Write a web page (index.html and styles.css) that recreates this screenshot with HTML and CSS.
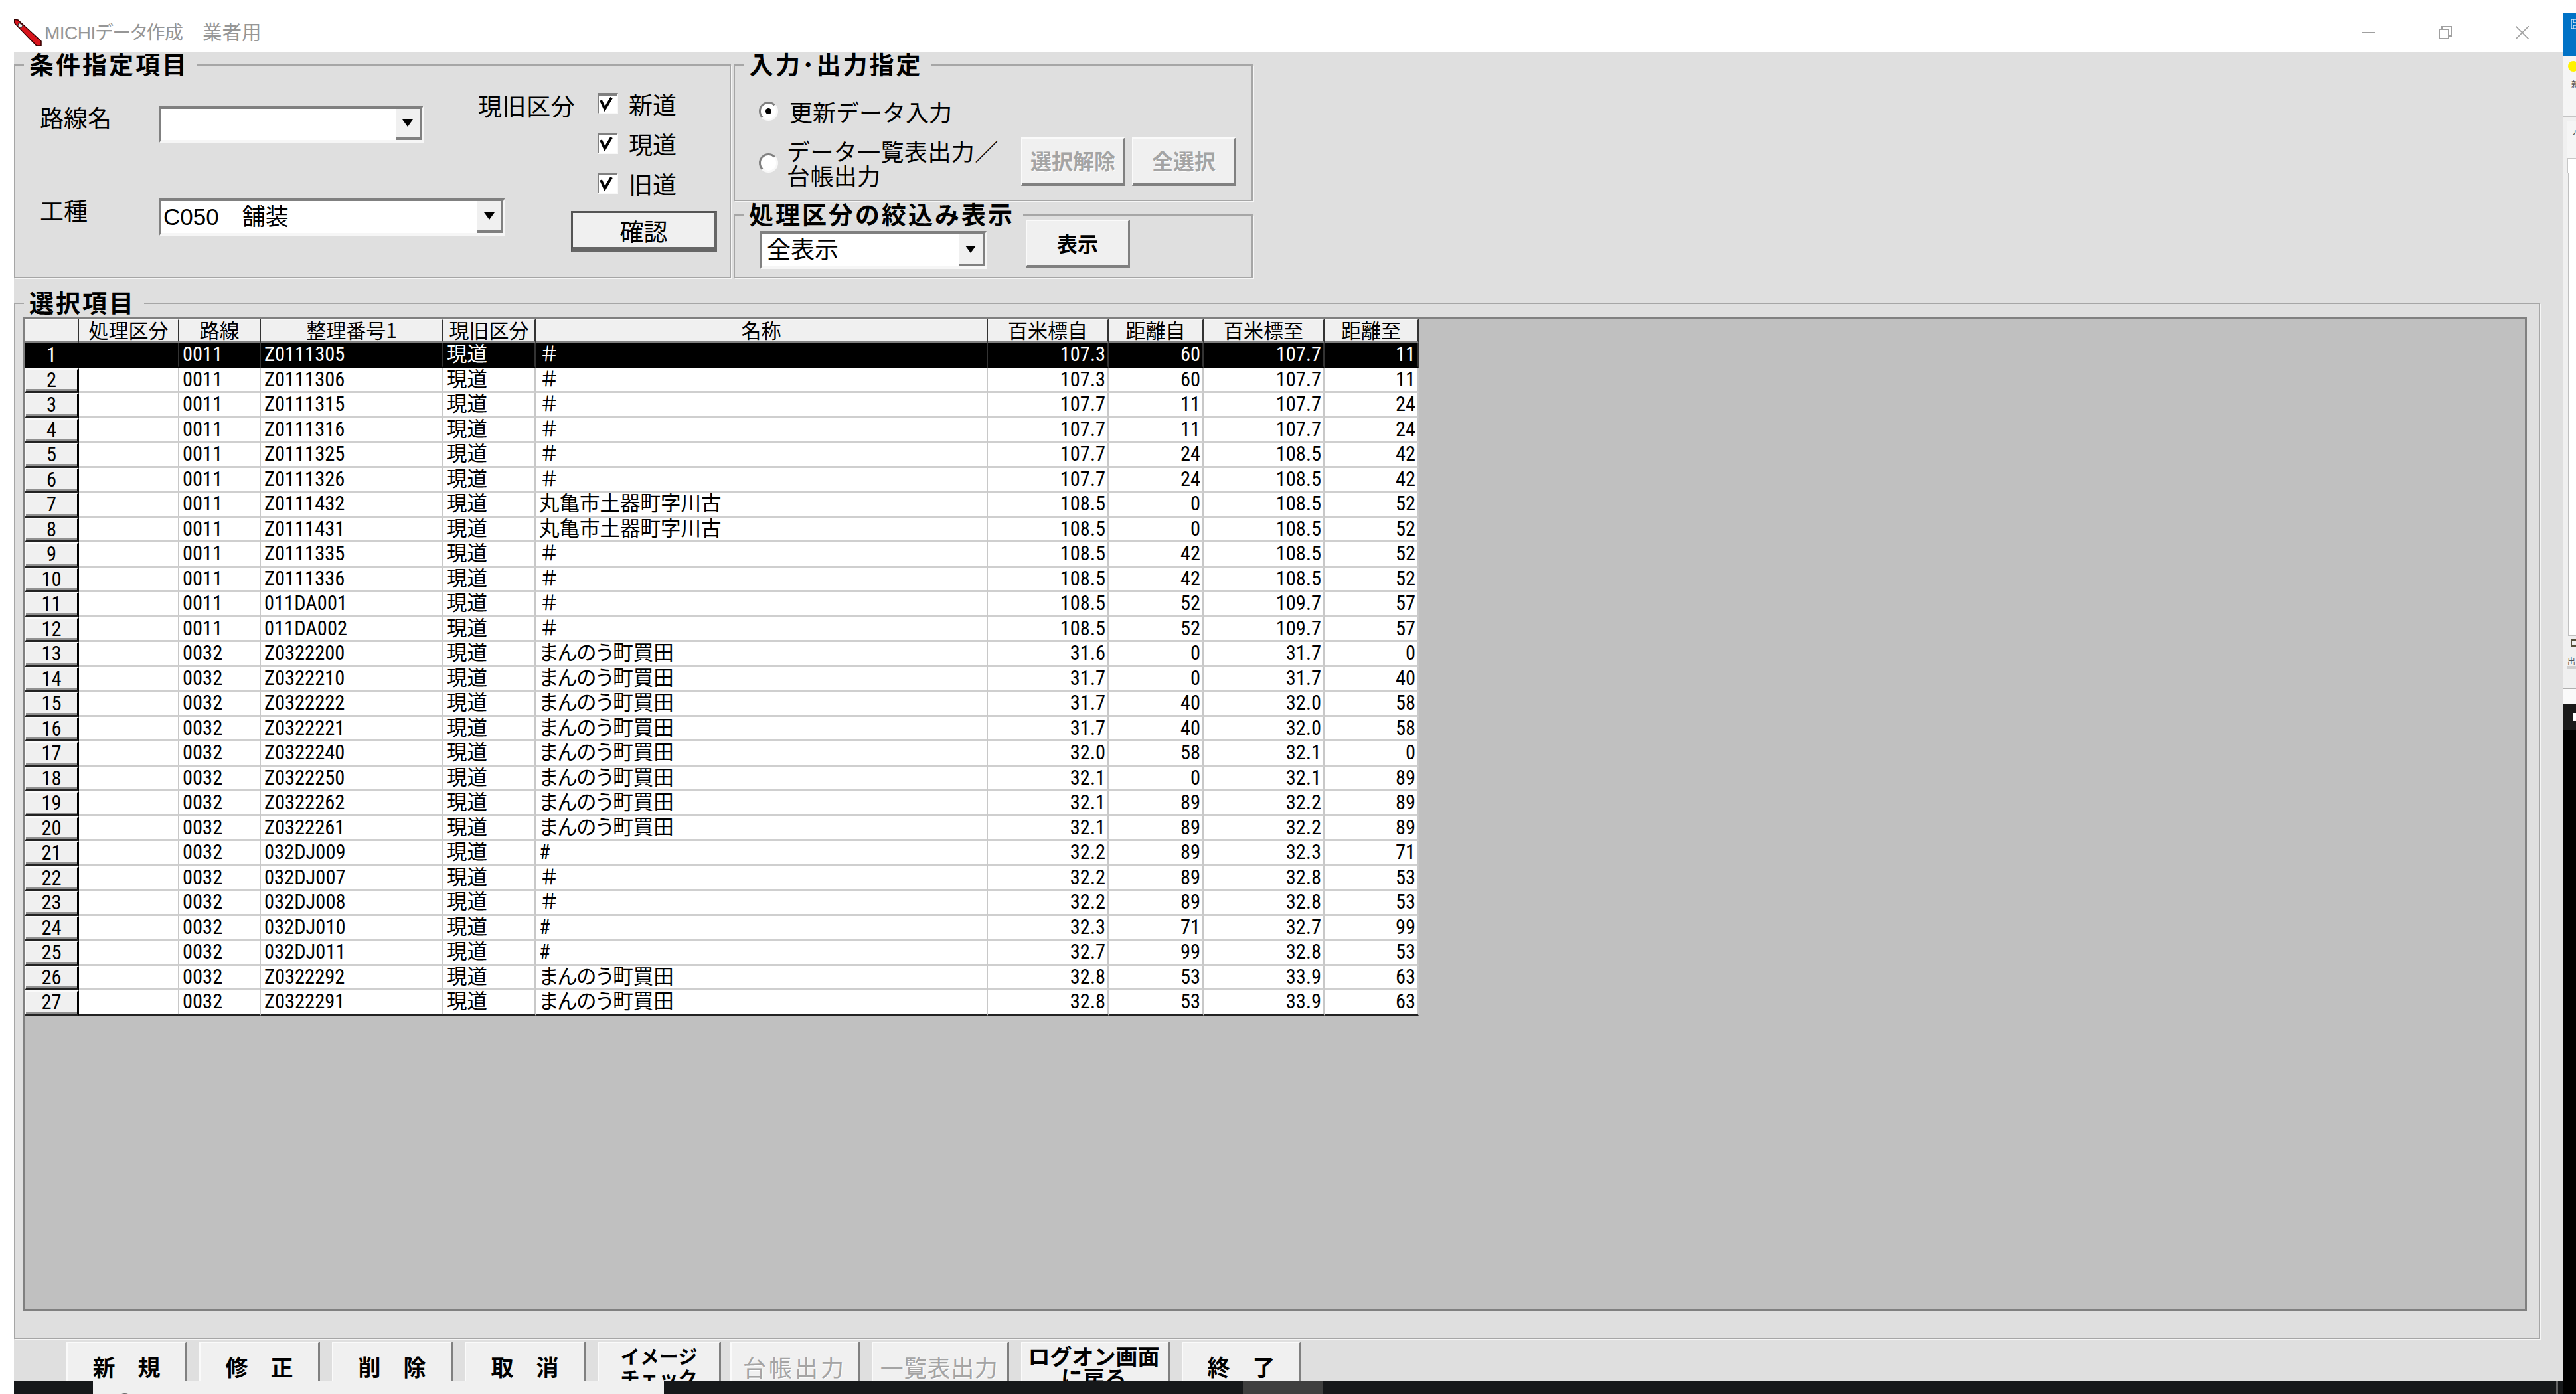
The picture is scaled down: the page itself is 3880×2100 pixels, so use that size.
FILE: index.html
```html
<!DOCTYPE html>
<html lang="ja">
<head>
    <meta charset="UTF-8">
    <title>MICHIデータ作成　業者用</title>
    <link rel="stylesheet" href="styles.css">
</head>
<body>
<div class="screen">
    <div class="app">
        <div class="titlebar">
            <svg class="app-icon" width="42" height="40" viewBox="0 0 42 40">
                <polygon points="0,0 6,1 41,33 41,40 34,40 1,6" fill="#d8141c" stroke="#300" stroke-width="1.5"/>
                <polygon points="7,5 13,9 11,13 6,10" fill="#eee" stroke="#333" stroke-width="1"/>
            </svg>
            <span class="title-text"><span class="title-main">MICHIデータ作成</span>　業者用</span>
            <div class="window-controls">
                <span class="win-btn"><svg width="20" height="20" viewBox="0 0 20 20"><path d="M0 10H20" stroke="#a0a0a0" stroke-width="2"/></svg></span>
                <span class="win-btn"><svg width="20" height="20" viewBox="0 0 20 20"><rect x="1" y="5" width="14" height="14" fill="none" stroke="#a0a0a0" stroke-width="2"/><path d="M5 5V1H19V15H15" fill="none" stroke="#a0a0a0" stroke-width="2"/></svg></span>
                <span class="win-btn"><svg width="20" height="20" viewBox="0 0 20 20"><path d="M0 0L20 20M20 0L0 20" stroke="#a0a0a0" stroke-width="1.6"/></svg></span>
            </div>
        </div>

        <div class="client">
            <div class="top-row">
                <fieldset class="group group-cond">
                    <legend>条件指定項目</legend>
                    <div class="cond-upper">
                        <span class="form-label">路線名</span>
                        <div class="combo combo-route">
                            <span class="combo-value"></span>
                            <span class="combo-drop"><i class="arrow"></i></span>
                        </div>
                        <span class="kubun-label">現旧区分</span>
                        <div class="checks">
                            <label class="check-row"><span class="checkbox"><svg width="27" height="26" viewBox="0 0 27 26"><path d="M3 7L9 20L19 3" fill="none" stroke="#000" stroke-width="4"/></svg></span>新道</label>
                            <label class="check-row"><span class="checkbox"><svg width="27" height="26" viewBox="0 0 27 26"><path d="M3 7L9 20L19 3" fill="none" stroke="#000" stroke-width="4"/></svg></span>現道</label>
                            <label class="check-row"><span class="checkbox"><svg width="27" height="26" viewBox="0 0 27 26"><path d="M3 7L9 20L19 3" fill="none" stroke="#000" stroke-width="4"/></svg></span>旧道</label>
                        </div>
                    </div>
                    <div class="cond-lower">
                        <span class="form-label">工種</span>
                        <div class="combo combo-kind">
                            <span class="combo-value">C050　舗装</span>
                            <span class="combo-drop"><i class="arrow"></i></span>
                        </div>
                        <button class="btn btn-default btn-confirm">確認</button>
                    </div>
                </fieldset>

                <div class="right-groups">
                    <fieldset class="group group-io">
                        <legend>入力･出力指定</legend>
                        <div class="radio-row radio-first">
                            <span class="radio radio-on"><i></i></span>
                            <span class="radio-text">更新データ入力</span>
                        </div>
                        <div class="radio-row">
                            <span class="radio"></span>
                            <span class="radio-text radio-text-wide">データ一覧表出力／<br>台帳出力</span>
                            <button class="btn btn-small btn-disabled">選択解除</button>
                            <button class="btn btn-small btn-disabled">全選択</button>
                        </div>
                    </fieldset>
                    <fieldset class="group group-filter">
                        <legend>処理区分の絞込み表示</legend>
                        <div class="filter-row">
                            <div class="combo combo-filter">
                                <span class="combo-value">全表示</span>
                                <span class="combo-drop"><i class="arrow"></i></span>
                            </div>
                            <button class="btn btn-small btn-show">表示</button>
                        </div>
                    </fieldset>
                </div>
            </div>

            <fieldset class="group group-list">
                <legend>選択項目</legend>
                <div class="grid-area">
                    <table class="grid">
                        <colgroup>
                            <col class="c-head"><col class="c-kbn"><col class="c-route"><col class="c-no"><col class="c-old"><col class="c-name"><col class="c-km"><col class="c-dist"><col class="c-km"><col class="c-dist2">
                        </colgroup>
                        <thead>
                            <tr><th></th><th>処理区分</th><th>路線</th><th>整理番号1</th><th>現旧区分</th><th>名称</th><th>百米標自</th><th>距離自</th><th>百米標至</th><th>距離至</th></tr>
                        </thead>
                        <tbody>
                            <tr class="selected"><th>1</th><td></td><td>0011</td><td>Z0111305</td><td>現道</td><td>＃</td><td class="num">107.3</td><td class="num">60</td><td class="num">107.7</td><td class="num">11</td></tr>
                            <tr><th>2</th><td></td><td>0011</td><td>Z0111306</td><td>現道</td><td>＃</td><td class="num">107.3</td><td class="num">60</td><td class="num">107.7</td><td class="num">11</td></tr>
                            <tr><th>3</th><td></td><td>0011</td><td>Z0111315</td><td>現道</td><td>＃</td><td class="num">107.7</td><td class="num">11</td><td class="num">107.7</td><td class="num">24</td></tr>
                            <tr><th>4</th><td></td><td>0011</td><td>Z0111316</td><td>現道</td><td>＃</td><td class="num">107.7</td><td class="num">11</td><td class="num">107.7</td><td class="num">24</td></tr>
                            <tr><th>5</th><td></td><td>0011</td><td>Z0111325</td><td>現道</td><td>＃</td><td class="num">107.7</td><td class="num">24</td><td class="num">108.5</td><td class="num">42</td></tr>
                            <tr><th>6</th><td></td><td>0011</td><td>Z0111326</td><td>現道</td><td>＃</td><td class="num">107.7</td><td class="num">24</td><td class="num">108.5</td><td class="num">42</td></tr>
                            <tr><th>7</th><td></td><td>0011</td><td>Z0111432</td><td>現道</td><td>丸亀市土器町字川古</td><td class="num">108.5</td><td class="num">0</td><td class="num">108.5</td><td class="num">52</td></tr>
                            <tr><th>8</th><td></td><td>0011</td><td>Z0111431</td><td>現道</td><td>丸亀市土器町字川古</td><td class="num">108.5</td><td class="num">0</td><td class="num">108.5</td><td class="num">52</td></tr>
                            <tr><th>9</th><td></td><td>0011</td><td>Z0111335</td><td>現道</td><td>＃</td><td class="num">108.5</td><td class="num">42</td><td class="num">108.5</td><td class="num">52</td></tr>
                            <tr><th>10</th><td></td><td>0011</td><td>Z0111336</td><td>現道</td><td>＃</td><td class="num">108.5</td><td class="num">42</td><td class="num">108.5</td><td class="num">52</td></tr>
                            <tr><th>11</th><td></td><td>0011</td><td>011DA001</td><td>現道</td><td>＃</td><td class="num">108.5</td><td class="num">52</td><td class="num">109.7</td><td class="num">57</td></tr>
                            <tr><th>12</th><td></td><td>0011</td><td>011DA002</td><td>現道</td><td>＃</td><td class="num">108.5</td><td class="num">52</td><td class="num">109.7</td><td class="num">57</td></tr>
                            <tr><th>13</th><td></td><td>0032</td><td>Z0322200</td><td>現道</td><td class="kana">まんのう町買田</td><td class="num">31.6</td><td class="num">0</td><td class="num">31.7</td><td class="num">0</td></tr>
                            <tr><th>14</th><td></td><td>0032</td><td>Z0322210</td><td>現道</td><td class="kana">まんのう町買田</td><td class="num">31.7</td><td class="num">0</td><td class="num">31.7</td><td class="num">40</td></tr>
                            <tr><th>15</th><td></td><td>0032</td><td>Z0322222</td><td>現道</td><td class="kana">まんのう町買田</td><td class="num">31.7</td><td class="num">40</td><td class="num">32.0</td><td class="num">58</td></tr>
                            <tr><th>16</th><td></td><td>0032</td><td>Z0322221</td><td>現道</td><td class="kana">まんのう町買田</td><td class="num">31.7</td><td class="num">40</td><td class="num">32.0</td><td class="num">58</td></tr>
                            <tr><th>17</th><td></td><td>0032</td><td>Z0322240</td><td>現道</td><td class="kana">まんのう町買田</td><td class="num">32.0</td><td class="num">58</td><td class="num">32.1</td><td class="num">0</td></tr>
                            <tr><th>18</th><td></td><td>0032</td><td>Z0322250</td><td>現道</td><td class="kana">まんのう町買田</td><td class="num">32.1</td><td class="num">0</td><td class="num">32.1</td><td class="num">89</td></tr>
                            <tr><th>19</th><td></td><td>0032</td><td>Z0322262</td><td>現道</td><td class="kana">まんのう町買田</td><td class="num">32.1</td><td class="num">89</td><td class="num">32.2</td><td class="num">89</td></tr>
                            <tr><th>20</th><td></td><td>0032</td><td>Z0322261</td><td>現道</td><td class="kana">まんのう町買田</td><td class="num">32.1</td><td class="num">89</td><td class="num">32.2</td><td class="num">89</td></tr>
                            <tr><th>21</th><td></td><td>0032</td><td>032DJ009</td><td>現道</td><td>#</td><td class="num">32.2</td><td class="num">89</td><td class="num">32.3</td><td class="num">71</td></tr>
                            <tr><th>22</th><td></td><td>0032</td><td>032DJ007</td><td>現道</td><td>＃</td><td class="num">32.2</td><td class="num">89</td><td class="num">32.8</td><td class="num">53</td></tr>
                            <tr><th>23</th><td></td><td>0032</td><td>032DJ008</td><td>現道</td><td>＃</td><td class="num">32.2</td><td class="num">89</td><td class="num">32.8</td><td class="num">53</td></tr>
                            <tr><th>24</th><td></td><td>0032</td><td>032DJ010</td><td>現道</td><td>#</td><td class="num">32.3</td><td class="num">71</td><td class="num">32.7</td><td class="num">99</td></tr>
                            <tr><th>25</th><td></td><td>0032</td><td>032DJ011</td><td>現道</td><td>#</td><td class="num">32.7</td><td class="num">99</td><td class="num">32.8</td><td class="num">53</td></tr>
                            <tr><th>26</th><td></td><td>0032</td><td>Z0322292</td><td>現道</td><td class="kana">まんのう町買田</td><td class="num">32.8</td><td class="num">53</td><td class="num">33.9</td><td class="num">63</td></tr>
                            <tr><th>27</th><td></td><td>0032</td><td>Z0322291</td><td>現道</td><td class="kana">まんのう町買田</td><td class="num">32.8</td><td class="num">53</td><td class="num">33.9</td><td class="num">63</td></tr>
                        </tbody>
                    </table>
                </div>
            </fieldset>

            <div class="button-bar">
                <button class="btn bar-btn">新　規</button>
                <button class="btn bar-btn">修　正</button>
                <button class="btn bar-btn">削　除</button>
                <button class="btn bar-btn">取　消</button>
                <button class="btn bar-btn bar-two bar-image">イメージ<br>チェック</button>
                <button class="btn bar-btn btn-disabled bar-ledger">台帳出力</button>
                <button class="btn bar-btn btn-disabled bar-list">一覧表出力</button>
                <button class="btn bar-btn bar-two bar-logon">ログオン画面<br>に戻る</button>
                <button class="btn bar-btn bar-end">終　了</button>
            </div>
        </div>

        <div class="taskbar-row">
            <div class="taskbar">
                <div class="search-box"><i class="search-ring"></i></div>
                <div class="task-tile"></div>
                <span class="clock">15:05</span>
                <i class="task-sep"></i>
            </div>
        </div>
    </div>

    <div class="side-window">
        <div class="side-top"></div>
        <div class="side-head">
            <svg width="8" height="16" viewBox="0 0 8 16"><path d="M8 1H1V15H8M4 1V6H8M4 15V10H8" fill="none" stroke="#cfe6f7" stroke-width="1.5"/></svg>
        </div>
        <div class="side-ribbon">
            <i class="side-dot"></i>
            <span class="side-word">新</span>
        </div>
        <div class="side-pane">
            <div class="side-field">ア</div>
            <div class="side-search"></div>
            <div class="side-list"></div>
            <i class="side-folder"></i>
            <span class="side-word">出</span>
            <i class="side-scroll"></i>
        </div>
        <div class="side-status"></div>
        <div class="side-dark"><i class="side-dash"></i></div>
        <div class="side-black"></div>
    </div>
</div>
</body>
</html>
```

FILE: styles.css
```css
* {
    box-sizing: border-box;
}
body {
    margin: 0;
    background: #fff;
    color: #000;
    font-family: "Noto Sans CJK JP", sans-serif;
}
.screen {
    display: flex;
    width: 3880px;
    height: 2100px;
    overflow: hidden;
}
.app {
    display: flex;
    flex-direction: column;
    width: 3860px;
    height: 2100px;
}

/* title bar */
.titlebar {
    display: flex;
    align-items: center;
    flex: none;
    height: 78px;
    padding-left: 21px;
    background: #fff;
}
.app-icon {
    flex: none;
    margin-top: 20px;
    margin-right: 4px;
}
.title-text {
    margin-top: 21px;
    font-family: "Liberation Sans", "Noto Sans CJK JP", sans-serif;
    font-size: 29.5px;
    line-height: 30px;
    color: #969696;
}
.title-main {
    font-size: 28px;
    font-feature-settings: "palt";
    letter-spacing: -0.5px;
}
.window-controls {
    display: flex;
    margin-left: auto;
    margin-top: 20px;
    padding-right: 3px;
}
.win-btn {
    display: flex;
    justify-content: center;
    align-items: center;
    width: 116px;
    height: 40px;
}

/* client */
.client {
    flex: none;
    height: 2002px;
    margin-left: 21px;
    background: #dfdfdf;
    overflow: hidden;
}
.top-row {
    display: flex;
    gap: 4px;
    margin-top: 4px;
}
.group {
    margin: 0;
    padding: 0;
    min-width: 0;
    border: 2px solid #a6a6a6;
    box-shadow: 2px 2px 0 #f6f6f6;
}
.group legend {
    margin-left: 13px;
    padding: 0 13px 2px 8px;
    font-size: 37px;
    font-weight: 700;
    line-height: 29px;
    letter-spacing: 3px;
}
.group-cond {
    flex: none;
    width: 1080px;
    height: 337px;
}
.right-groups {
    flex: none;
    width: 782px;
}
.group-io {
    width: 100%;
    height: 221px;
}
.group-filter {
    width: 100%;
    height: 111px;
    margin-top: 5px;
}
.group-list {
    width: 3805px;
    height: 1576px;
    margin-top: 22px;
}

/* condition group */
.cond-upper {
    display: flex;
    height: 185px;
}
.cond-lower {
    display: flex;
}
.form-label {
    flex: none;
    width: 180px;
    margin-left: 37px;
    padding-right: 0;
    font-size: 36px;
    line-height: 36px;
}
.cond-upper .form-label {
    margin-top: 45px;
}
.cond-lower .form-label {
    margin-top: 0;
}
.kubun-label {
    flex: none;
    width: 146px;
    margin-top: 27px;
    margin-left: 82px;
    font-size: 36px;
    line-height: 36px;
    letter-spacing: 0.6px;
    white-space: nowrap;
}
.checks {
    display: flex;
    flex-direction: column;
    gap: 24px;
    margin-top: 25px;
    margin-left: 34px;
}
.check-row {
    display: flex;
    align-items: center;
    height: 36px;
    font-size: 36px;
    line-height: 36px;
}
.checkbox {
    display: block;
    flex: none;
    width: 31px;
    height: 32px;
    margin-right: 16px;
    background: #fff;
    border-style: solid;
    border-width: 4px 2px 2px 2px;
    border-color: #808080 #f8f8f8 #f8f8f8 #808080;
}
.checkbox svg {
    display: block;
}

/* combo box */
.combo {
    display: flex;
    flex: none;
    background: #fff;
    border-style: solid;
    border-width: 5px 3px 4px 3px;
    border-color: #808080 #f6f6f6 #f6f6f6 #808080;
}
.combo-route {
    width: 398px;
    height: 56px;
    margin-top: 46px;
}
.combo-kind {
    width: 521px;
    height: 57px;
}
.combo-filter {
    width: 341px;
    height: 57px;
    margin-top: 9px;
    margin-left: 38px;
}
.combo-value {
    flex: 1;
    padding-left: 3px;
    font-family: "Liberation Sans", "Noto Sans CJK JP", sans-serif;
    font-size: 35px;
    line-height: 48px;
    white-space: nowrap;
}
.combo-filter .combo-value {
    padding-left: 7px;
    font-size: 36px;
}
.combo-drop {
    display: flex;
    justify-content: center;
    align-items: center;
    flex: none;
    width: 39px;
    background: #f0f0f0;
    border-right: 3px solid #808080;
    border-bottom: 4px solid #808080;
}
.arrow {
    display: block;
    width: 0;
    height: 0;
    border-left: 8px solid transparent;
    border-right: 8px solid transparent;
    border-top: 11px solid #000;
}

/* buttons */
.btn {
    display: block;
    flex: none;
    padding: 0;
    background: #f0f0f0;
    color: #000;
    font-family: "Noto Sans CJK JP", sans-serif;
    font-weight: 700;
    border-style: solid;
    border-width: 2px 3px 4px 2px;
    border-color: #fafafa #808080 #808080 #fafafa;
    white-space: nowrap;
}
.btn-default {
    border-width: 3px 4px 8px 3px;
    border-color: #555 #666 #666 #555;
}
.btn-confirm {
    width: 220px;
    height: 62px;
    margin-top: 20px;
    margin-left: 99px;
    font-size: 36px;
    font-weight: 400;
    line-height: 40px;
}
.btn-small {
    width: 157px;
    height: 73px;
    font-size: 31px;
    line-height: 36px;
}
.radio-row .btn-small {
    margin-top: -3px;
    padding-bottom: 4px;
    font-size: 32px;
}
.btn-show {
    height: 72px;
    margin-top: -8px;
    margin-left: 59px;
}
.btn-disabled {
    color: #a4a4a4;
    text-shadow: 1px 1px 0 #fff;
}

/* radios */
.radio-row {
    display: flex;
    align-items: center;
    margin-left: 36px;
}
.radio-first {
    margin-top: 36px;
    margin-bottom: 22px;
}
.radio {
    display: flex;
    justify-content: center;
    align-items: center;
    flex: none;
    width: 29px;
    height: 29px;
    margin-right: 17px;
    background: #fff;
    border: 3px solid;
    border-color: #808080 #f8f8f8 #f8f8f8 #808080;
    border-radius: 50%;
}
.radio-on i {
    display: block;
    width: 9px;
    height: 9px;
    background: #000;
    border-radius: 50%;
}
.radio-text {
    font-size: 35px;
    line-height: 37px;
}
.radio-text-wide {
    flex: none;
    width: 351px;
    margin-left: -4px;
    margin-right: 2px;
    letter-spacing: 0.4px;
    white-space: nowrap;
}
.radio-row .btn-small + .btn-small {
    margin-left: 10px;
}
.filter-row {
    display: flex;
    align-items: flex-start;
}

/* list */
.grid-area {
    width: 3771px;
    height: 1497px;
    margin-top: 6px;
    margin-left: 12px;
    background: #c0c0c0;
    border-style: solid;
    border-width: 2px 3px 3px 2px;
    border-color: #808080;
    overflow: hidden;
}
.grid {
    width: 2100px;
    table-layout: fixed;
    border-collapse: separate;
    border-spacing: 0;
    font-family: Roboto, "Liberation Sans", "Noto Sans CJK JP", sans-serif;
    font-size: 30.5px;
    font-stretch: 75%;
    line-height: 30px;
}
.c-head { width: 82px; }
.c-kbn { width: 151px; }
.c-route { width: 123px; }
.c-no { width: 275px; }
.c-old { width: 139px; }
.c-name { width: 681px; }
.c-km { width: 182px; }
.c-dist { width: 143px; }
.c-dist2 { width: 142px; }
.grid thead tr {
    height: 37px;
}
.grid thead th {
    padding: 0 0 3px;
    background: #f0f0f0;
    font-family: "Noto Sans CJK JP", sans-serif;
    font-size: 30px;
    font-weight: 400;
    line-height: 27px;
    text-align: center;
    white-space: nowrap;
    border-top: 2px solid #fafafa;
    border-right: 2px solid #333;
    border-bottom: 4px solid #808080;
}
.grid tbody tr {
    height: 37.5px;
}
.grid tbody td {
    padding: 0 3px 0 5px;
    background: #fff;
    white-space: nowrap;
    overflow: hidden;
    border-right: 2px solid #c8c8c8;
    border-bottom: 3px solid #cfcfcf;
}
.grid tbody th {
    padding: 0;
    background: #f0f0f0;
    font-weight: 400;
    text-align: center;
    border-top: 2px solid #fafafa;
    border-left: 2px solid #fafafa;
    border-right: 3px solid #000;
    border-bottom: 3px solid #222;
    box-shadow: inset 0 -3px 0 #909090;
}
.grid td.num {
    text-align: right;
}
.grid td.kana {
    font-feature-settings: "palt";
}
.grid tbody tr:last-child td {
    border-bottom: 3px solid #222;
}
.grid tr.selected th {
    background: #000;
    color: #fff;
    border-color: #000;
    box-shadow: none;
}
.grid tr.selected td {
    background: #000;
    color: #fff;
    border-right-color: #333;
    border-bottom-color: #000;
}

/* bottom buttons */
.button-bar {
    display: flex;
    gap: 18px;
    height: 78px;
    margin-top: 4px;
    padding-left: 79px;
}
.bar-btn {
    width: 182px;
    height: 78px;
    font-size: 34px;
    line-height: 36px;
}
.bar-two {
    font-size: 29px;
    line-height: 33px;
}
.bar-image {
    width: 186px;
}
.bar-ledger {
    width: 195px;
    margin-left: -4px;
    font-size: 35px;
    font-weight: 400;
    letter-spacing: 4px;
}
.bar-list {
    width: 207px;
    padding-right: 3px;
    font-size: 35px;
    font-weight: 400;
    letter-spacing: 0.5px;
}
.bar-logon {
    width: 224px;
    padding-right: 4px;
    font-size: 33px;
}
.bar-end {
    width: 180px;
}

/* taskbar */
.taskbar-row {
    flex: none;
    height: 20px;
    padding-left: 21px;
    background: #fff;
}
.taskbar {
    display: flex;
    height: 20px;
    padding-left: 119px;
    background: #16181a;
    overflow: hidden;
}
.search-box {
    flex: none;
    width: 860px;
    height: 20px;
    padding-top: 18px;
    padding-left: 36px;
    background: #f0f0f0;
    border-top: 1px solid #a0a0a0;
}
.search-ring {
    display: block;
    width: 24px;
    height: 24px;
    border: 3px solid #666;
    border-radius: 50%;
}
.task-tile {
    flex: none;
    width: 121px;
    height: 20px;
    margin-left: 872px;
    background: #3f3f3f;
}
.clock {
    flex: none;
    margin-left: 1612px;
    padding-top: 17px;
    color: #fff;
    font-family: "Noto Sans", sans-serif;
    font-size: 26px;
    line-height: 30px;
}
.task-sep {
    display: block;
    flex: none;
    width: 3px;
    height: 20px;
    margin-left: 179px;
    background: #666;
}

/* the other window at the right edge */
.side-window {
    display: flex;
    flex-direction: column;
    flex: none;
    width: 20px;
    height: 2100px;
    overflow: hidden;
}
.side-top {
    flex: none;
    height: 20px;
    background: #fff;
}
.side-head {
    display: flex;
    flex: none;
    justify-content: flex-end;
    height: 64px;
    padding-top: 8px;
    background: #0072c6;
}
.side-ribbon {
    flex: none;
    height: 92px;
    padding-left: 13px;
    padding-top: 8px;
    background: #f5f5f5;
    border-bottom: 2px solid #c4c4c4;
}
.side-dot {
    display: block;
    width: 16px;
    height: 16px;
    margin-left: -5px;
    background: #fff200;
    border-radius: 50%;
}
.side-word {
    display: block;
    margin-top: 12px;
    font-size: 12px;
    line-height: 14px;
    color: #555;
    white-space: nowrap;
}
.side-pane {
    flex: none;
    height: 860px;
    padding-top: 6px;
    padding-left: 6px;
    background: #f0f0f0;
}
.side-field {
    height: 56px;
    padding: 6px 0 0 6px;
    background: #f5f5f5;
    border-top: 1px solid #ccc;
    border-left: 1px solid #ccc;
    font-size: 12px;
    color: #555;
}
.side-search {
    height: 22px;
    background: #fff;
    border-left: 2px solid #c8c8c8;
    border-top: 2px solid #c8c8c8;
}
.side-list {
    height: 698px;
    margin-left: 2px;
    background: #fff;
    border-left: 2px solid #c0c0c0;
    border-bottom: 2px solid #c0c0c0;
}
.side-folder {
    display: block;
    width: 12px;
    height: 11px;
    margin-top: 5px;
    margin-left: 6px;
    border: 2px solid #55503c;
    border-right: 0;
}
.side-pane .side-word {
    margin-top: 15px;
    margin-left: 1px;
}
.side-scroll {
    display: block;
    height: 5px;
    margin-top: 0;
    background: #d0d0d0;
}
.side-status {
    flex: none;
    height: 24px;
    background: #fafafa;
    border-top: 2px solid #b0b0b0;
}
.side-dark {
    flex: none;
    height: 40px;
    padding-top: 14px;
    padding-left: 16px;
    background: #1a1a1a;
}
.side-dash {
    display: block;
    width: 4px;
    height: 12px;
    background: #fff;
}
.side-black {
    flex: 1;
    background: #000;
}
```
